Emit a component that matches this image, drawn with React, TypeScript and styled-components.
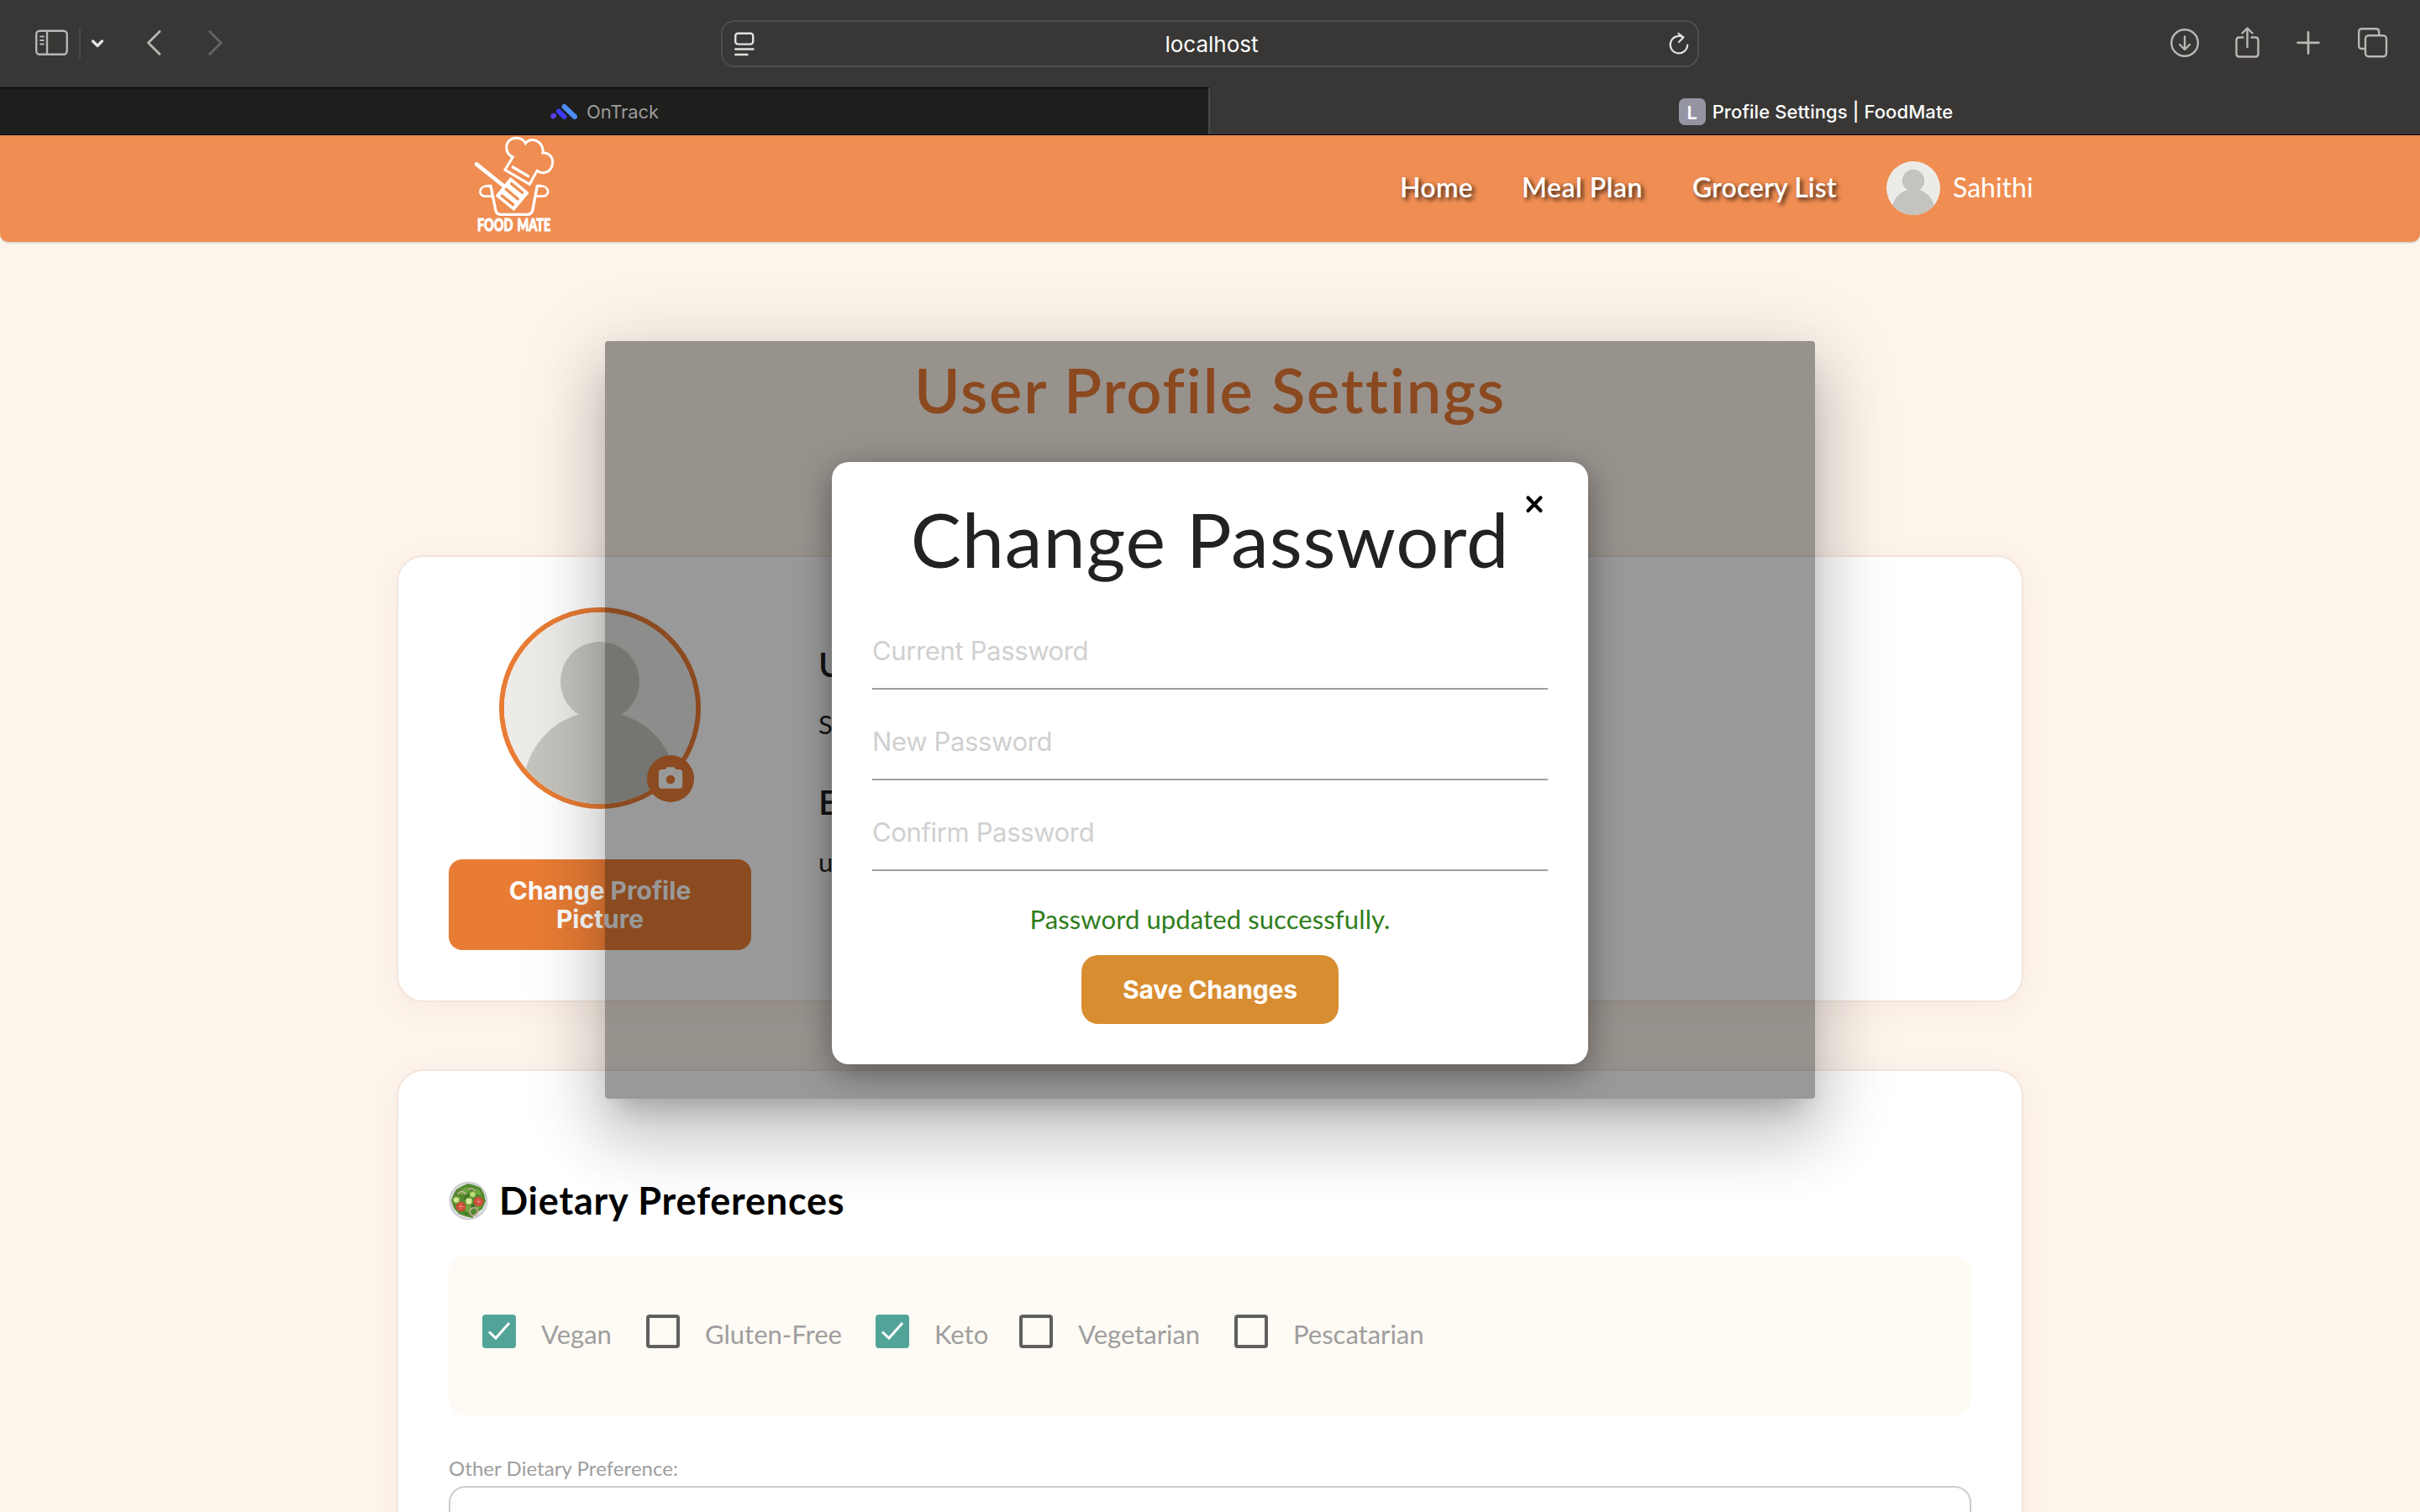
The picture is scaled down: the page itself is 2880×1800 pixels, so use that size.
import React from "react";
import styled, { createGlobalStyle } from "styled-components";

const UI_FONT = `"Inter", "Liberation Sans", sans-serif`;
const BRAND_FONT = `"Lato", "Open Sans", sans-serif`;

const GlobalStyle = createGlobalStyle`
  * { box-sizing: border-box; }
  html, body { margin: 0; padding: 0; overflow: hidden; background: #fdf4ec; }
  p, h1, h2 { margin: 0; }
  svg { display: block; flex: none; }
`;

const BrowserWindow = styled.div`
  position: relative;
  display: flex;
  flex-direction: column;
  width: 2880px;
  height: 1800px;
  overflow: hidden;
  background: #fdf4ec;
  font-family: ${BRAND_FONT};
`;

/* Browser chrome */

const Toolbar = styled.header`
  flex: none;
  display: grid;
  grid-template-columns: 858px 1164px 1fr;
  align-items: center;
  height: 104px;
  background: #383735;
`;

const ToolGroup = styled.div<{ $start: number }>`
  display: flex;
  align-items: center;
  padding-left: ${(p) => p.$start}px;
`;

const ToolIcon = styled.svg<{ $gap?: number }>`
  height: 40px;
  margin-left: ${(p) => p.$gap ?? 0}px;
  fill: none;
  stroke: #b9b7b5;
  stroke-width: 2.4;
  stroke-linecap: round;
  stroke-linejoin: round;
`;

const ToolDivider = styled.span`
  width: 2px;
  height: 36px;
  margin-left: 12px;
  background: #4b4a48;
`;

const AddressBar = styled.div`
  display: flex;
  align-items: center;
  justify-content: space-between;
  height: 56px;
  padding: 0 9px 0 13px;
  border: 2px solid #4f4e4c;
  border-radius: 16px;
`;

const Address = styled.span`
  padding-top: 1px;
  color: #fff;
  font: 400 26px/32px ${UI_FONT};
`;

const TabStrip = styled.div`
  flex: none;
  display: grid;
  grid-template-columns: 1440px 1440px;
  height: 57px;
  background: #383735;
  border-bottom: 1px solid #000;
`;

const Tab = styled.div<{ $active?: boolean }>`
  display: flex;
  align-items: center;
  justify-content: center;
  gap: ${(p) => (p.$active ? 8 : 10)}px;
  padding-left: ${(p) => (p.$active ? 2 : 0)}px;
  color: ${(p) => (p.$active ? "#fff" : "#9b9b99")};
  background: ${(p) => (p.$active ? "#383735" : "#1e1e1c")};
  border-top: 1px solid ${(p) => (p.$active ? "#383735" : "#000")};
  border-right: ${(p) => (p.$active ? "none" : "2px solid #4a4a48")};
  font: ${(p) => (p.$active ? 500 : 400)} 22px/28px ${UI_FONT};
  letter-spacing: ${(p) => (p.$active ? 0.1 : -0.08)}px;
`;

const LetterIcon = styled.span`
  display: flex;
  align-items: center;
  justify-content: center;
  width: 32px;
  height: 32px;
  padding-top: 2px;
  border-radius: 7px;
  color: #fff;
  background: #9594a3;
  font: 600 22px/28px ${UI_FONT};
`;

/* Site navigation */

const Navbar = styled.nav`
  flex: none;
  display: flex;
  align-items: center;
  height: 127px;
  padding-left: 563px;
  background: #ef8d52;
  border-radius: 0 0 10px 10px;
  box-shadow: 0 2px 0 #dedad6;
`;

const Logo = styled.svg`
  width: 100px;
  height: 117px;
  align-self: flex-start;
`;

const NavItems = styled.div`
  display: flex;
  align-items: center;
  margin-left: 1003px;
  padding-bottom: 1px;
`;

const NavLink = styled.a<{ $width: number; $tracking: number }>`
  width: ${(p) => p.$width}px;
  padding-bottom: 3px;
  color: #fff;
  font-size: 32px;
  font-weight: 600;
  line-height: 40px;
  letter-spacing: ${(p) => p.$tracking}px;
  white-space: nowrap;
  text-shadow: 3px 3px 5px rgba(0, 0, 0, 0.75);
`;

const UserName = styled.span`
  padding: 0 0 3px 15px;
  color: #fff;
  font-size: 32px;
  line-height: 40px;
`;

/* Page body */

const Main = styled.main`
  flex: none;
  display: flex;
  flex-direction: column;
  width: 1936px;
  margin: 0 auto;
`;

const PageTitle = styled.h1`
  margin: 126px 0 147px;
  color: #e87a35;
  font-size: 74px;
  font-weight: 600;
  line-height: 100px;
  letter-spacing: 1.85px;
  text-align: center;
`;

const Card = styled.section`
  padding: 60px;
  border: 2px solid #f4e5dc;
  border-radius: 32px;
  background: #fff;
  box-shadow: 0 8px 36px rgba(120, 70, 40, 0.05);
`;

const ProfileCard = styled(Card)`
  display: flex;
  gap: 80px;
  height: 532px;
  margin-bottom: 80px;
`;

const DietCard = styled(Card)`
  height: 700px;
  padding-top: 127px;
`;

const PictureColumn = styled.div`
  display: flex;
  flex-direction: column;
  align-items: center;
  width: 360px;
`;

const AvatarFrame = styled.div`
  position: relative;
  width: 240px;
  height: 240px;
  border: 6px solid #e87c35;
  border-radius: 50%;
`;

const CameraBadge = styled.span`
  position: absolute;
  right: 2px;
  bottom: 2px;
  display: flex;
  align-items: center;
  justify-content: center;
  width: 56px;
  height: 56px;
  border-radius: 50%;
  background: #e87c35;
`;

const PictureButton = styled.button`
  width: 360px;
  height: 108px;
  margin-top: 60px;
  padding: 0 60px 0;
  border: 0;
  border-radius: 16px;
  color: #fff;
  background: #e87c35;
  font: 700 30px/34px ${UI_FONT};
`;

const Details = styled.div`
  padding-top: 44px;
  color: #222;
`;

const DetailLabel = styled.h2`
  font-size: 41px;
  font-weight: 600;
  line-height: 48px;
`;

const DetailValue = styled.p`
  margin: 27px 0 49px;
  font-size: 31px;
  line-height: 40px;
`;

const SectionTitle = styled.h2`
  display: flex;
  align-items: center;
  gap: 13px;
  margin-bottom: 39px;
  color: #000;
  font-size: 45px;
  font-weight: 700;
  line-height: 54px;
  letter-spacing: 0.78px;
`;

const Options = styled.div`
  display: flex;
  align-items: flex-start;
  height: 190px;
  padding: 70px 40px;
  border-radius: 20px;
  background: #fefaf4;
`;

const Option = styled.label<{ $width: number }>`
  display: flex;
  align-items: center;
  gap: 30px;
  width: ${(p) => p.$width}px;
  height: 40px;
`;

const Box = styled.span<{ $checked?: boolean }>`
  flex: none;
  display: flex;
  align-items: center;
  justify-content: center;
  width: 40px;
  height: 40px;
  border: ${(p) => (p.$checked ? "none" : "4px solid #5f5f5e")};
  border-radius: 4px;
  background: ${(p) => (p.$checked ? "#52a499" : "transparent")};
`;

const OptionText = styled.span`
  padding-top: 6px;
  color: #9e9e9e;
  font-size: 31px;
  line-height: 40px;
`;

const FieldLabel = styled.p`
  margin: 48px 0 6px;
  color: #9e9e9e;
  font-size: 24px;
  line-height: 30px;
  letter-spacing: 0.06px;
`;

const OtherInput = styled.div`
  height: 110px;
  border: 2px solid #ccc;
  border-radius: 20px;
  background: #fff;
`;

/* Change password modal */

const Overlay = styled.div`
  position: absolute;
  top: 406px;
  left: 720px;
  display: flex;
  justify-content: center;
  align-items: flex-start;
  width: 1440px;
  height: 902px;
  padding-top: 144px;
  border-radius: 4px;
  background: rgba(0, 0, 0, 0.4);
  box-shadow:
    0 22px 30px -14px rgba(0, 0, 0, 0.2),
    0 48px 76px 6px rgba(0, 0, 0, 0.14),
    0 18px 92px 16px rgba(0, 0, 0, 0.12);
`;

const Dialog = styled.div`
  position: relative;
  display: flex;
  flex-direction: column;
  align-items: center;
  width: 900px;
  height: 717px;
  padding: 37px 48px 48px;
  border-radius: 20px;
  background: #fff;
  box-shadow: 0 10px 40px rgba(0, 0, 0, 0.4);
`;

const CloseIcon = styled.svg`
  position: absolute;
  top: 38px;
  right: 51px;
  width: 25px;
  height: 24px;
`;

const DialogTitle = styled.h1`
  margin-bottom: 18px;
  color: #222;
  font-size: 90px;
  font-weight: 400;
  line-height: 108px;
  letter-spacing: 0.85px;
  white-space: nowrap;
`;

const PasswordField = styled.div`
  flex: none;
  align-self: stretch;
  display: flex;
  align-items: center;
  height: 108px;
  padding-top: 17px;
  border-bottom: 2px solid #9e9e9e;
  color: #d0d0d0;
  font: 400 31px/40px ${UI_FONT};
  letter-spacing: -0.36px;
`;

const SuccessText = styled.p`
  margin: 39px 0 25px;
  color: #2f7d1b;
  font-size: 31px;
  line-height: 36px;
  letter-spacing: 0.1px;
`;

const SaveButton = styled.button`
  width: 306px;
  height: 82px;
  padding: 0;
  border: 0;
  border-radius: 20px;
  color: #fff;
  background: #d88d31;
  font: 700 30px/40px ${UI_FONT};
  letter-spacing: -0.15px;
`;

const Person = ({ size }: { size: number }) => (
  <svg width={size} height={size} viewBox="0 0 228 228">
    <clipPath id={`person${size}`}>
      <circle cx="114" cy="114" r="114" />
    </clipPath>
    <g clipPath={`url(#person${size})`}>
      <rect width="228" height="228" fill="#ecebe8" />
      <circle cx="114" cy="82" r="47" fill="#c4c3bd" />
      <circle cx="114" cy="209" r="91" fill="#c4c3bd" />
    </g>
  </svg>
);

const FoodMateLogo = () => (
  <Logo viewBox="70 63 300 351" fill="none" stroke="#fff" strokeWidth="9" strokeLinejoin="round">
    <path strokeLinejoin="miter" d="M212 141C184 129 182 92 205 78C226 66 250 76 257 92C273 74 296 78 308 91C318 102 321 114 319 126C345 125 358 146 353 169C347 194 320 205 298 190L272 238L184 187Z" />
    <path strokeLinecap="round" strokeWidth="10" d="M212 177L267 209" />
    <path strokeLinecap="round" strokeWidth="14" d="M82 166L182 246" />
    <path fill="#fff" strokeWidth="8" d="M204 218L265 269L215 328L155 279Z" />
    <path stroke="#ef8d52" strokeLinecap="round" strokeWidth="10" d="M207 236L246 268M188 256L230 291M173 279L213 311" />
    <path strokeWidth="10" d="M120 244H133L150 328Q153 346 168 346H264Q280 346 283 328L299 244H313" />
    <path strokeWidth="8" d="M128 245C88 240 86 281 114 281H140M304 245C346 240 346 281 318 281H292" />
    <g fontFamily="Lato, sans-serif" fontWeight="900" fontSize="61" fill="#fff" strokeWidth="3">
      <text x="85" y="405" textLength="262" lengthAdjust="spacingAndGlyphs" wordSpacing="6">
        FOOD MATE
      </text>
    </g>
  </Logo>
);

const SaladIcon = () => (
  <svg width="47" height="47" viewBox="0 0 47 47">
    <circle cx="23.5" cy="23.5" r="22.8" fill="#c3c7cb" />
    <circle cx="23.5" cy="23.5" r="21.4" fill="#dcdfdf" />
    <path fill="#558a30" d="M9 10L16 6L23 3L31 5L38 8L42 15L44 24L40 33L33 38L28 44L20 42L12 39L6 32L3 23L6 15Z" />
    <path fill="#6fa640" d="M14 11L21 7L26 10L22 15L14 17ZM28 8L37 11L39 17L31 15ZM17 30L25 28L28 34L22 38ZM31 28L40 27L37 33L32 33ZM8 18L14 21L12 25L6 24Z" />
    <path fill="#3f6e25" d="M20 17L25 16L24 21L18 22ZM28 27L32 30L27 32ZM19 36L24 39L20 40Z" />
    <circle cx="14.500" cy="30.500" r="5.800" fill="#cf4c38" />
    <circle cx="35.500" cy="24.500" r="5.800" fill="#cf4c38" />
    <path stroke="#e98b76" strokeWidth="1.200" d="M14.500 27.500v6M11.500 30.500h6M35.500 21.500v6M32.500 24.500h6" />
    <circle cx="24" cy="24" r="4" fill="#d3e99a" stroke="#8dbb4a" />
    <circle cx="9" cy="22.500" r="3.600" fill="#d3e99a" stroke="#8dbb4a" />
    <circle cx="28.500" cy="16" r="3.300" fill="#bfdc7c" stroke="#8dbb4a" />
    <g fill="none" stroke="#d3aba4" strokeWidth="1.500">
      <circle cx="30" cy="36.500" r="4.800" />
      <path d="M11 16C13 11 19 12 20 16M23 10C26 8 30 9 31 12" />
    </g>
  </svg>
);

const CheckMark = () => (
  <svg width="28" height="24" viewBox="0 0 28 24" fill="none" stroke="#fff" strokeWidth="3">
    <path d="M2 12.500L10 20L26 2" />
  </svg>
);

const dietOptions = [
  { label: "Vegan", width: 195, checked: true },
  { label: "Gluten-Free", width: 273 },
  { label: "Keto", width: 171, checked: true },
  { label: "Vegetarian", width: 256 },
  { label: "Pescatarian", width: 240 },
];

export default function App() {
  return (
    <BrowserWindow>
      <GlobalStyle />
      <Toolbar>
        <ToolGroup $start={41}>
          <ToolIcon width="41" viewBox="0 0 41 40">
            <rect x="2.200" y="4.700" width="36.500" height="28" rx="4" />
            <path d="M15 5V32.500" />
            <path strokeWidth="1.800" d="M7 11.500H11M7 16H11M7 20.500H11" />
          </ToolIcon>
          <ToolDivider />
          <ToolIcon $gap={12} width="16" viewBox="0 0 16 40">
            <path stroke="#e6e4e2" strokeWidth="3.200" d="M2.500 17L8 22.500L13.500 17" />
          </ToolIcon>
          <ToolIcon $gap={49} width="20" viewBox="0 0 20 40">
            <path strokeWidth="2.800" d="M17 5.500L3.500 19L17 32.500" />
          </ToolIcon>
          <ToolIcon $gap={53} width="20" viewBox="0 0 20 40">
            <path stroke="#646361" strokeWidth="2.800" d="M3.500 5.500L17 19L3.500 32.500" />
          </ToolIcon>
        </ToolGroup>
        <AddressBar>
          <ToolIcon width="26" viewBox="0 0 26 40">
            <g stroke="#e4e2e0">
              <rect x="2.200" y="7.800" width="21" height="12.800" rx="3" />
              <path d="M2.200 26.500H23.500M2.200 33H16.500" />
            </g>
          </ToolIcon>
          <Address>localhost</Address>
          <ToolIcon width="26" viewBox="0 0 26 40">
            <g stroke="#e4e2e0" strokeWidth="2.200">
              <path d="M18 12.300A10.200 10.200 0 1 0 23.200 21.500" />
              <path d="M12.500 7.800L18.500 12.500L13 18" />
            </g>
          </ToolIcon>
        </AddressBar>
        <ToolGroup $start={560}>
          <ToolIcon width="36" viewBox="0 0 36 40">
            <circle cx="18" cy="19" r="15.800" />
            <path d="M18 11.500V26.500M12 21L18 27L24 21" />
          </ToolIcon>
          <ToolIcon $gap={41} width="31" viewBox="0 0 31 40">
            <path d="M10.500 12.500H6Q2.500 12.500 2.500 16V32Q2.500 35.500 6 35.500H25Q28.500 35.500 28.500 32V16Q28.500 12.500 25 12.500H20.500M15.500 1.800V24M9.500 7.500L15.500 1.500L21.500 7.500" />
          </ToolIcon>
          <ToolIcon $gap={42} width="30" viewBox="0 0 30 40">
            <path strokeWidth="2.800" d="M15 6.500V31.500M2.500 18.800H27.500" />
          </ToolIcon>
          <ToolIcon $gap={43} width="37" viewBox="0 0 37 40">
            <path d="M9 26H6Q2.200 26 2.200 22.200V6Q2.200 2.200 6 2.200H22.500Q26.200 2.200 26.200 6V9.500" />
            <rect x="10" y="10.200" width="25" height="25" rx="4" />
          </ToolIcon>
        </ToolGroup>
      </Toolbar>

      <TabStrip>
        <Tab>
          <svg width="34" height="20" viewBox="0 0 34 20" fill="none" strokeLinecap="round" strokeWidth="6">
            <path stroke="#5a3ef0" d="M4.200 15.500L5 14.700" />
            <path stroke="#3d3bf5" d="M11 9.500L17.500 16" />
            <path stroke="#4c8df6" d="M17.500 4L30 16" />
          </svg>
          OnTrack
        </Tab>
        <Tab $active>
          <LetterIcon>L</LetterIcon>
          Profile Settings | FoodMate
        </Tab>
      </TabStrip>

      <Navbar>
        <FoodMateLogo />
        <NavItems>
          <NavLink $width={145} $tracking={0.3}>Home</NavLink>
          <NavLink $width={203} $tracking={0.5}>Meal Plan</NavLink>
          <NavLink $width={231} $tracking={0.1}>Grocery List</NavLink>
          <Person size={64} />
          <UserName>Sahithi</UserName>
        </NavItems>
      </Navbar>

      <Main>
        <PageTitle>User Profile Settings</PageTitle>
        <ProfileCard>
          <PictureColumn>
            <AvatarFrame>
              <Person size={228} />
              <CameraBadge>
                <svg width="34" height="34" viewBox="0 0 24 24">
                  <path fill="#fff" d="M9 2.300L7.500 4.300H4.500C3 4.300 2 5.200 2 6.800V18C2 19.400 3 20.300 4.500 20.300H19.500C21 20.300 22 19.400 22 18V6.800C22 5.200 21 4.300 19.500 4.300H16.500L15 2.300Z" />
                  <circle cx="12" cy="12.700" r="3.700" fill="#e87c35" />
                </svg>
              </CameraBadge>
            </AvatarFrame>
            <PictureButton>Change Profile Picture</PictureButton>
          </PictureColumn>
          <Details>
            <DetailLabel>Username</DetailLabel>
            <DetailValue>Sahithi</DetailValue>
            <DetailLabel>Email</DetailLabel>
            <DetailValue>user</DetailValue>
          </Details>
        </ProfileCard>

        <DietCard>
          <SectionTitle>
            <SaladIcon />
            Dietary Preferences
          </SectionTitle>
          <Options>
            {dietOptions.map((o) => (
              <Option key={o.label} $width={o.width}>
                <Box $checked={o.checked}>{o.checked && <CheckMark />}</Box>
                <OptionText>{o.label}</OptionText>
              </Option>
            ))}
          </Options>
          <FieldLabel>Other Dietary Preference:</FieldLabel>
          <OtherInput />
        </DietCard>
      </Main>

      <Overlay>
        <Dialog>
          <CloseIcon viewBox="0 0 25 24" stroke="#000" strokeWidth="4.200" strokeLinecap="round">
            <path d="M4.500 4.500L19.500 20M19.500 4.500L4.500 20" />
          </CloseIcon>
          <DialogTitle>Change Password</DialogTitle>
          <PasswordField>Current Password</PasswordField>
          <PasswordField>New Password</PasswordField>
          <PasswordField>Confirm Password</PasswordField>
          <SuccessText>Password updated successfully.</SuccessText>
          <SaveButton>Save Changes</SaveButton>
        </Dialog>
      </Overlay>
    </BrowserWindow>
  );
}
